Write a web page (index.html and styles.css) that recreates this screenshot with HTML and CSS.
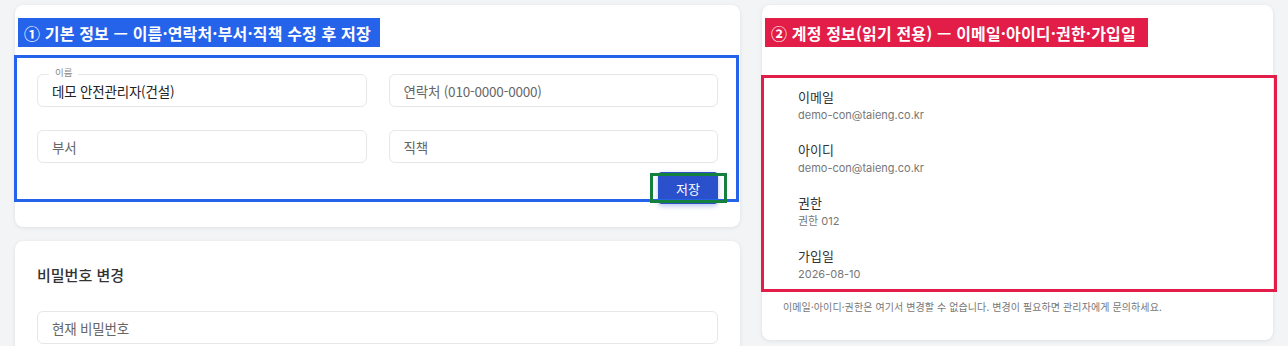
FILE: index.html
```html
<!DOCTYPE html>
<html lang="ko">
<head>
<meta charset="utf-8">
<link rel="stylesheet" href="styles.css">
</head>
<body>
<div class="page">
  <div class="col-left">
    <section class="card card-basic">
      <div class="form-grid">
        <div class="field">
          <span class="float-label">이름</span>
          <div class="input filled">데모 안전관리자(건설)</div>
        </div>
        <div class="field">
          <div class="input">연락처 (010-0000-0000)</div>
        </div>
        <div class="field">
          <div class="input">부서</div>
        </div>
        <div class="field">
          <div class="input">직책</div>
        </div>
      </div>
      <div class="actions">
        <button class="btn-primary">저장</button>
      </div>
      <div class="note-tag tag-blue">① 기본 정보 — 이름·연락처·부서·직책 수정 후 저장</div>
      <div class="note-box box-blue"></div>
      <div class="note-box box-green"></div>
    </section>
    <section class="card card-password">
      <h2 class="card-title-visible">비밀번호 변경</h2>
      <div class="input wide">현재 비밀번호</div>
    </section>
  </div>
  <section class="card card-account">
    <dl class="info-list">
      <div class="info-item"><dt>이메일</dt><dd>demo-con@taieng.co.kr</dd></div>
      <div class="info-item"><dt>아이디</dt><dd>demo-con@taieng.co.kr</dd></div>
      <div class="info-item"><dt>권한</dt><dd>권한 012</dd></div>
      <div class="info-item"><dt>가입일</dt><dd>2026-08-10</dd></div>
    </dl>
    <p class="footnote">이메일·아이디·권한은 여기서 변경할 수 없습니다. 변경이 필요하면 관리자에게 문의하세요.</p>
    <div class="note-tag tag-red">② 계정 정보(읽기 전용) — 이메일·아이디·권한·가입일</div>
    <div class="note-box box-red"></div>
  </section>
</div>
</body>
</html>
```

FILE: styles.css
```css
* { box-sizing: border-box; }
html, body { margin: 0; padding: 0; }
body {
  background: #f3f4f6;
  font-family: Inter, "Noto Sans CJK KR", sans-serif;
  color: #222;
  height: 346px;
  overflow: hidden;
}
.page {
  display: grid;
  grid-template-columns: 725px 511px;
  column-gap: 22px;
  padding: 5px 15px 0 15px;
  align-items: start;
}
.col-left {
  display: flex;
  flex-direction: column;
  gap: 14px;
}
.card {
  position: relative;
  background: #fff;
  border-radius: 8px;
  box-shadow: 0 1px 4px rgba(0,0,0,0.08), 0 0 1px rgba(0,0,0,0.06);
}
.card-basic {
  padding: 69px 22px 23px;
}
.form-grid {
  display: grid;
  grid-template-columns: 1fr 1fr;
  column-gap: 22px;
  row-gap: 23px;
}
.field { position: relative; }
.input {
  height: 33px;
  border: 1px solid #e6e7ea;
  border-radius: 6px;
  background: #fff;
  padding: 0 14px;
  display: flex;
  align-items: center;
  font-family: "Noto Sans CJK KR", sans-serif;
  font-size: 13.5px;
  color: #666;
  letter-spacing: -0.2px;
}
.input.filled { color: #222; }
.float-label {
  position: absolute;
  left: 12px;
  top: -8px;
  padding: 0 6px;
  background: #fff;
  font-family: "Noto Sans CJK KR", sans-serif;
  font-size: 9.5px;
  line-height: 12px;
  color: #888;
}
.actions {
  display: flex;
  justify-content: flex-end;
  margin-top: 9px;
}
.btn-primary {
  width: 60px;
  height: 32px;
  border: none;
  border-radius: 4px;
  background: #2b50cc;
  color: #fff;
  font-family: "Noto Sans CJK KR", sans-serif;
  font-size: 13px;
  box-shadow: 0 2px 5px rgba(43,80,204,0.35);
}
.card-password {
  padding: 20px 22px 0;
  height: 120px;
}
.card-title-visible {
  margin: 0;
  font-family: "Noto Sans CJK KR", sans-serif;
  font-size: 15px;
  font-weight: 500;
  line-height: 28px;
  color: #333;
}
.input.wide { margin-top: 22px; }

.card-account {
  padding: 73px 21px 26px;
}
.info-list {
  margin: 0;
  padding: 10px 15px 7px;
  display: flex;
  flex-direction: column;
  gap: 18px;
}
.info-item { display: flex; flex-direction: column; }
.info-item dt {
  font-family: "Noto Sans CJK KR", sans-serif;
  font-size: 13px;
  line-height: 18px;
  color: #333;
}
.info-item dd {
  margin: 1px 0 0;
  font-size: 11px;
  line-height: 16px;
  color: #777;
}
.footnote {
  margin: 11px 0 0;
  font-family: "Noto Sans CJK KR", sans-serif;
  font-size: 10px;
  line-height: 14px;
  color: #777;
  letter-spacing: 0.1px;
}

/* annotation overlays */
.note-tag {
  position: absolute;
  top: 13px;
  height: 29px;
  display: flex;
  align-items: center;
  padding: 0 6px;
  font-family: "Noto Sans CJK KR", sans-serif;
  font-weight: 700;
  font-size: 16px;
  color: #fff;
  white-space: nowrap;
  letter-spacing: 0.15px;
}
.tag-blue { left: 3px; width: 362px; background: #2563eb; }
.tag-red { left: 3px; width: 383px; background: #e11d48; }
.note-box {
  position: absolute;
  border: 3px solid;
  pointer-events: none;
}
.box-blue { border-color: #2563eb; left: -1px; top: 50px; width: 725px; height: 147px; }
.box-green { border-color: #15803d; left: 635px; top: 168px; width: 77px; height: 30px; }
.box-red { border-color: #e11d48; left: -1px; top: 70px; width: 516px; height: 217px; }
```
